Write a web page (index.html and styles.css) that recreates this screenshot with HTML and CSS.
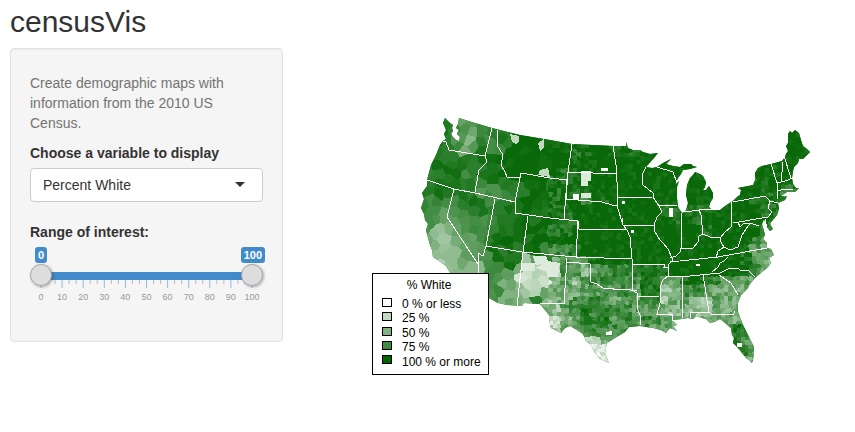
FILE: index.html
```html
<!DOCTYPE html>
<html lang="en">
<head>
<meta charset="utf-8">
<meta name="viewport" content="width=device-width, initial-scale=1">
<title>censusVis</title>
<link rel="stylesheet" href="styles.css">
</head>
<body>
<h1 class="title">censusVis</h1>
<div class="layout">
  <form class="sidebar">
    <p class="help">Create demographic maps with information from the 2010 US Census.</p>
    <label class="label" for="variable">Choose a variable to display</label>
    <div class="select-wrap">
      <select id="variable" class="select">
        <option>Percent White</option>
        <option>Percent Black</option>
        <option>Percent Hispanic</option>
        <option>Percent Asian</option>
      </select>
      <svg class="caret" viewBox="0 0 10 5" aria-hidden="true"><path d="M0 0H10L5 5Z"/></svg>
    </div>
    <label class="label" for="range-min">Range of interest:</label>
    <div class="slider">
      <div class="values"><output class="value" for="range-min">0</output><output class="value" for="range-max">100</output></div>
      <div class="track">
        <div class="bar"></div>
        <input class="range" id="range-min" type="range" min="0" max="100" value="0">
        <input class="range" id="range-max" type="range" min="0" max="100" value="100" aria-label="Range of interest, upper end">
      </div>
      <svg class="ticks" id="ticks" aria-hidden="true"></svg>
      <div class="scale"><span>0</span><span>10</span><span>20</span><span>30</span><span>40</span><span>50</span><span>60</span><span>70</span><span>80</span><span>90</span><span>100</span></div>
    </div>
  </form>
  <main class="plot">
    <svg class="map" viewBox="309 48 546 330" role="img" aria-label="Percent White by county">
      <defs>
        <clipPath id="land"><path shape-rendering="crispEdges" d="M445 118L448 121L450 123L453 125L452 128L453 131L451 134L453 137L456 140L459 141L460 137L457 134L459 130L456 128L458 124L459 118L475 123L492 128L520 135L550 140L572 144L613 146L626 146L626 142L628 148L633 150L640 150L643 152L650 154L658 153L654 158L646 167L652 168L657 167L663 163L671 159L666 164L673 166L680 167L684 164L691 164L693 166L697 167L690 169L683 170L681 174L678 178L675 185L679 181L677 187L677 198L678 207L682 213L685 212L687 207L688 203L686 195L687 185L690 178L693 175L695 172L700 174L703 176L706 182L705 187L703 190L706 190L709 186L713 193L713 198L710 203L709 207L712 210L720 210L725 206L733 201L737 197L740 195L741 190L738 188L753 185L755 180L755 173L758 168L762 166L771 164L782 161L785 157L786 154L788 151L786 146L788 143L788 134L790 131L792 133L795 130L799 133L801 140L803 146L807 149L810 152L806 156L803 159L799 159L798 163L794 167L793 171L792 178L793 184L796 188L799 188L795 192L787 192L781 196L787 196L785 200L778 203L779 209L777 215L772 221L770 224L773 229L770 231L767 227L764 219L762 224L764 231L765 235L763 239L767 243L767 248L771 249L774 255L769 258L771 263L768 267L762 272L755 278L750 284L748 288L741 295L738 303L738 312L743 325L748 335L754 347L754 355L752 363L749 360L746 358L742 353L737 347L733 343L734 338L732 335L731 328L725 323L720 319L714 322L710 323L706 319L702 318L696 316L693 319L688 318L682 319L672 320L677 325L673 326L677 331L670 328L666 333L661 330L653 328L640 326L629 327L625 332L620 335L615 338L607 343L605 353L609 363L600 359L595 353L591 345L586 341L583 334L577 330L570 326L565 328L561 333L551 328L549 320L549 315L540 304L524 303L522 306L507 305L498 303L489 298L470 288L450 273L446 266L442 263L433 257L432 250L430 245L428 238L426 230L428 224L425 220L424 214L421 208L424 199L422 193L427 186L427 180L431 165L436 155L440 145L443 141L446 139L444 134L446 130L443 123Z"/></clipPath>
      </defs>
      <g clip-path="url(#land)" shape-rendering="crispEdges">
        <rect class="base" x="415" y="110" width="400" height="260"/>
        <g id="counties"></g>
        <path fill="#c0dac0" d="M510 134l9 2v5l-3 3-4-2zM538 143l6-4v8l-4 4zM540 170l8-2 2 9-12-2z"/>
        <path fill="#dcebdc" d="M581 171h10v10h-3v5h-7zM581 193h10v5h-10zM521 263h14v8h-14zM535 268l13-7 12 2-2 14h-11v-5zM533 256h13l3 7-13 2z"/>
        <path fill="#fff" d="M601 168h7v3h-7zM573 194h6v6h-6zM622 201h3v3h-3zM669 208h4v9h-4zM631 230h3v3h-3zM696 264h4v2h-4zM606 332l6-1v4h-6zM737 343h5v4h-5z"/>
      </g>
      <g class="borders" shape-rendering="crispEdges">
        <path d="M443 141L446 142L449 150L467 153L485 156L492 128M485 156L487 162L479 170L475 192M427 180L454 189L475 193L515 202M497 130V145L503 155L501 165L505 172L507 177H517L520 178L521 173M521 173L550 178L567 180M521 173L515 202V213L550 218L578 221V229M567 180L564 219M572 144L568 172L566 199M568 172L617 174M566 199L602 202L612 205L617 206M613 146L616 165L618 198L617 206L623 225M618 198L653 197M646 167L642 175L643 185L653 193V197L659 206L662 212L657 217L654 225M659 206L677 205M657 167L673 172L677 183M454 189L447 217L478 264L479 273M495 199L486 246L483 256L478 253V264M486 246L522 252M528 216L523 252L517 306M522 252L576 257L632 259M578 221L576 257M578 229L627 230M567 258L564 304L540 303M567 262L590 264L591 282L597 284L603 288L610 288L617 290L625 289L637 291M622 218L623 225L627 230L630 237L632 259V290L637 293V308L640 315V325M623 225H654M654 225L655 232L660 240L663 243L668 249L673 260L668 265L669 275L663 280L660 287V303L657 314H672L673 321M632 264H665L664 267H668M637 296H659M668 277L690 276L720 273L730 268H737L742 271L748 270L755 277M670 262L718 257L745 252L767 248M670 258L676 256L680 252L681 248H693L698 242L699 236L703 234L710 237L720 238L721 242L724 247L718 251L716 258M681 213L682 235L681 248M699 210L701 215L703 234M685 212L699 210L712 209M720 238L725 232L731 227L732 215M731 202L732 225M733 223L768 217M724 247L730 250L738 247L742 235L748 226L750 224L744 223L740 227L738 222M750 223L759 226M765 219L767 228M733 202L765 196L770 201L768 208L772 212L768 217M770 201L778 203M771 164L777 183V199M777 183L785 181L793 178M777 191L785 189L793 189M782 162L783 168L781 176V181M784 156L791 178M682 277V318M703 275L709 312L690 313V318M709 312L711 314L733 315L735 311M719 275L731 283L738 295M728 257L724 261L720 263L718 267L712 272"/>
      </g>
      <g class="legend">
        <rect class="legend-box" x="372" y="273" width="116" height="101"/>
        <text x="429" y="289" text-anchor="middle">% White</text>
        <rect fill="#fff" x="382" y="298" width="9" height="8"/><text x="402" y="308">0 % or less</text>
        <rect fill="#bfd8bf" x="382" y="312" width="9" height="8"/><text x="402" y="322">25 %</text>
        <rect fill="#80b280" x="382" y="327" width="9" height="8"/><text x="402" y="337">50 %</text>
        <rect fill="#408b40" x="382" y="341" width="9" height="8"/><text x="402" y="351">75 %</text>
        <rect fill="#006400" x="382" y="355" width="9" height="8"/><text x="402" y="366">100 % or more</text>
      </g>
    </svg>
  </main>
</div>
<script src="map.js"></script>
</body>
</html>
```
FILE: styles.css
```css
* { box-sizing: border-box; }
body {
  margin: 0;
  padding: 5px 0 0 10px;
  background: #fff;
  color: #333;
  font: 14px/20px "Liberation Sans", Arial, sans-serif;
}
.title { margin: 0 0 10px; font-size: 30px; line-height: 33px; font-weight: 400; }
.layout { display: grid; grid-template-columns: 1fr 2fr; gap: 26px; align-items: start; }
.sidebar {
  padding: 24px 19px 38px;
  background: #f5f5f5;
  border: 1px solid #e3e3e3;
  border-radius: 4px;
  box-shadow: inset 0 1px 1px rgba(0, 0, 0, .05);
}
.help { margin: 0 0 10px; color: #737373; }
.label { display: block; margin-bottom: 5px; font-weight: 700; }
.select-wrap { position: relative; margin-bottom: 20px; }
.select {
  display: block;
  width: 100%;
  height: 34px;
  padding: 0 12px;
  border: 1px solid #ccc;
  border-radius: 4px;
  background: #fff;
  color: #333;
  font: inherit;
  appearance: none;
}
.caret { position: absolute; right: 18px; top: 14px; width: 10px; height: 5px; fill: #333; pointer-events: none; }

.values { display: flex; justify-content: space-between; padding-left: 5px; margin-right: -2px; }
.value {
  padding: 0 3px;
  border-radius: 3px;
  background: #428bca;
  color: #fff;
  font-size: 11px;
  font-weight: 700;
  line-height: 16px;
}
.track { position: relative; height: 24px; padding: 9px 11px 0; }
.bar { height: 8px; background: #428bca; }
.range {
  position: absolute;
  left: 0;
  top: 1px;
  z-index: 1;
  width: 100%;
  height: 22px;
  margin: 0;
  background: none;
  appearance: none;
  pointer-events: none;
}
.range::-webkit-slider-thumb {
  width: 22px;
  height: 22px;
  border: 1px solid #aaa;
  border-radius: 50%;
  background: #ddd;
  box-shadow: 1px 1px 3px rgba(0, 0, 0, .3);
  appearance: none;
  pointer-events: auto;
}
.ticks { display: block; width: calc(100% - 22px); height: 8px; margin: -7px 11px 0; overflow: visible; }
.tick-major { stroke: #8fbce0; }
.tick-minor { stroke: #bbb; }
.scale { display: flex; justify-content: space-between; padding: 3px 1px 0; font-size: 9px; line-height: 12px; color: #999; }
.scale span { width: 20px; text-align: center; }

.map { display: block; width: 100%; height: auto; }
.base { fill: #186f18; }
.borders { fill: none; stroke: #fff; stroke-width: 1; }
.legend { font-size: 12px; fill: #000; }
.legend rect { stroke: #000; stroke-width: 1; shape-rendering: crispEdges; }
.legend-box { fill: #fff; }
```
FILE: map.js
```js
const SVG = "http://www.w3.org/2000/svg";

// Slider ruler: a long mark each tenth, two short ones between.
const ticks = document.getElementById("ticks");
for (let i = 0; i <= 30; i++) {
  const line = document.createElementNS(SVG, "line");
  const x = (i / 30 * 100) + "%";
  const major = i % 3 === 0;
  line.setAttribute("x1", x);
  line.setAttribute("x2", x);
  line.setAttribute("y2", major ? 8 : 4);
  line.setAttribute("class", major ? "tick-major" : "tick-minor");
  ticks.append(line);
}

// Share by area: one digit for each 10 units of the map, 9 is the highest.
const share = [
  "888766788899999999999999999999999999999",
  "888765788999987888899999999999999999999",
  "887646788999998888888899999999999999999",
  "888755878999999889989899999999999999999",
  "888788889999999899999999999999999999999",
  "888877889999998899999999999999999998999",
  "888887788999987899999999999999999889999",
  "888886677889989889999999999999999989777",
  "777788777898889979899999999999999888766",
  "776677888898888999999999888889999988655",
  "765677778998998899999999989899999998666",
  "645667778899878999999999999989999977555",
  "544566788889999999999999999999999765444",
  "444466688889777899999999999999998655444",
  "444456788846857578999999999999998654444",
  "433445776523337646777888899999999765555",
  "333334765522246477777788558987666555555",
  "333333775543555566677688457765555555555",
  "333333675537455777756677356336555755555",
  "333333665545546787777666545446567655555",
  "333333655533224688867677655556656555555",
  "333333333333235577777676656767787555555",
  "333333333333365133566657756677886555555",
  "333333333333332111234544555555577655555",
  "333333333333333322111222555555555643333",
  "333333333333333321001222555555555521111"
].map(row => [...row].map(Number));

const hash = (a, b, k) => {
  let n = Math.imul(a, 374761393) ^ Math.imul(b, 668265263) ^ Math.imul(k, 1274126177);
  n = Math.imul(n ^ (n >>> 13), 1103515245);
  return ((n ^ (n >>> 16)) >>> 0) / 4294967296;
};

// Western counties are large and ragged, eastern ones small and square.
const west = { size: 9, jitter: .9 };
const east = { size: 4, jitter: .45 };

const countyAt = (x, y) => {
  const zone = x < 548 ? west : east;
  const cx = Math.floor(x / zone.size), cy = Math.floor(y / zone.size);
  let best = Infinity, county = null;
  for (let i = cx - 1; i <= cx + 1; i++) {
    for (let j = cy - 1; j <= cy + 1; j++) {
      const sx = (i + .5 + (hash(i, j, 1) - .5) * zone.jitter) * zone.size;
      const sy = (j + .5 + (hash(i, j, 2) - .5) * zone.jitter) * zone.size;
      const d = (sx - x) ** 2 + (sy - y) ** 2;
      if (d < best) { best = d; county = [i, j, sx, sy]; }
    }
  }
  return county;
};

const levelAt = (x, y) => {
  const [i, j, sx, sy] = countyAt(x, y);
  const row = share[Math.max(0, Math.min(25, Math.floor((sy - 115) / 10)))];
  const s = row[Math.max(0, Math.min(38, Math.floor((sx - 420) / 10)))];
  const spread = x < 548 ? .14 : s > 8 ? .2 : s > 7 ? .24 : .3;
  const v = s / 9 + (hash(i, j, 3) - .55) * spread;
  return Math.round(Math.max(0, Math.min(.98, v)) * 30);
};

// Neighbouring pixels of one level join into a run; each level is one path.
const runs = new Map();
for (let y = 116; y < 366; y++) {
  let start = 418, level = levelAt(start, y);
  for (let x = 419; x <= 814; x++) {
    const next = x === 814 ? -1 : levelAt(x, y);
    if (next !== level) {
      runs.set(level, (runs.get(level) || "") + `M${start} ${y}h${x - start}v1h${start - x}z`);
      start = x;
      level = next;
    }
  }
}
const counties = document.getElementById("counties");
for (const [level, d] of runs) {
  const t = level / 30;
  const path = document.createElementNS(SVG, "path");
  path.setAttribute("d", d);
  path.setAttribute("fill", `rgb(${Math.round(255 - 255 * t)},${Math.round(255 - 155 * t)},${Math.round(255 - 255 * t)})`);
  counties.append(path);
}
```
